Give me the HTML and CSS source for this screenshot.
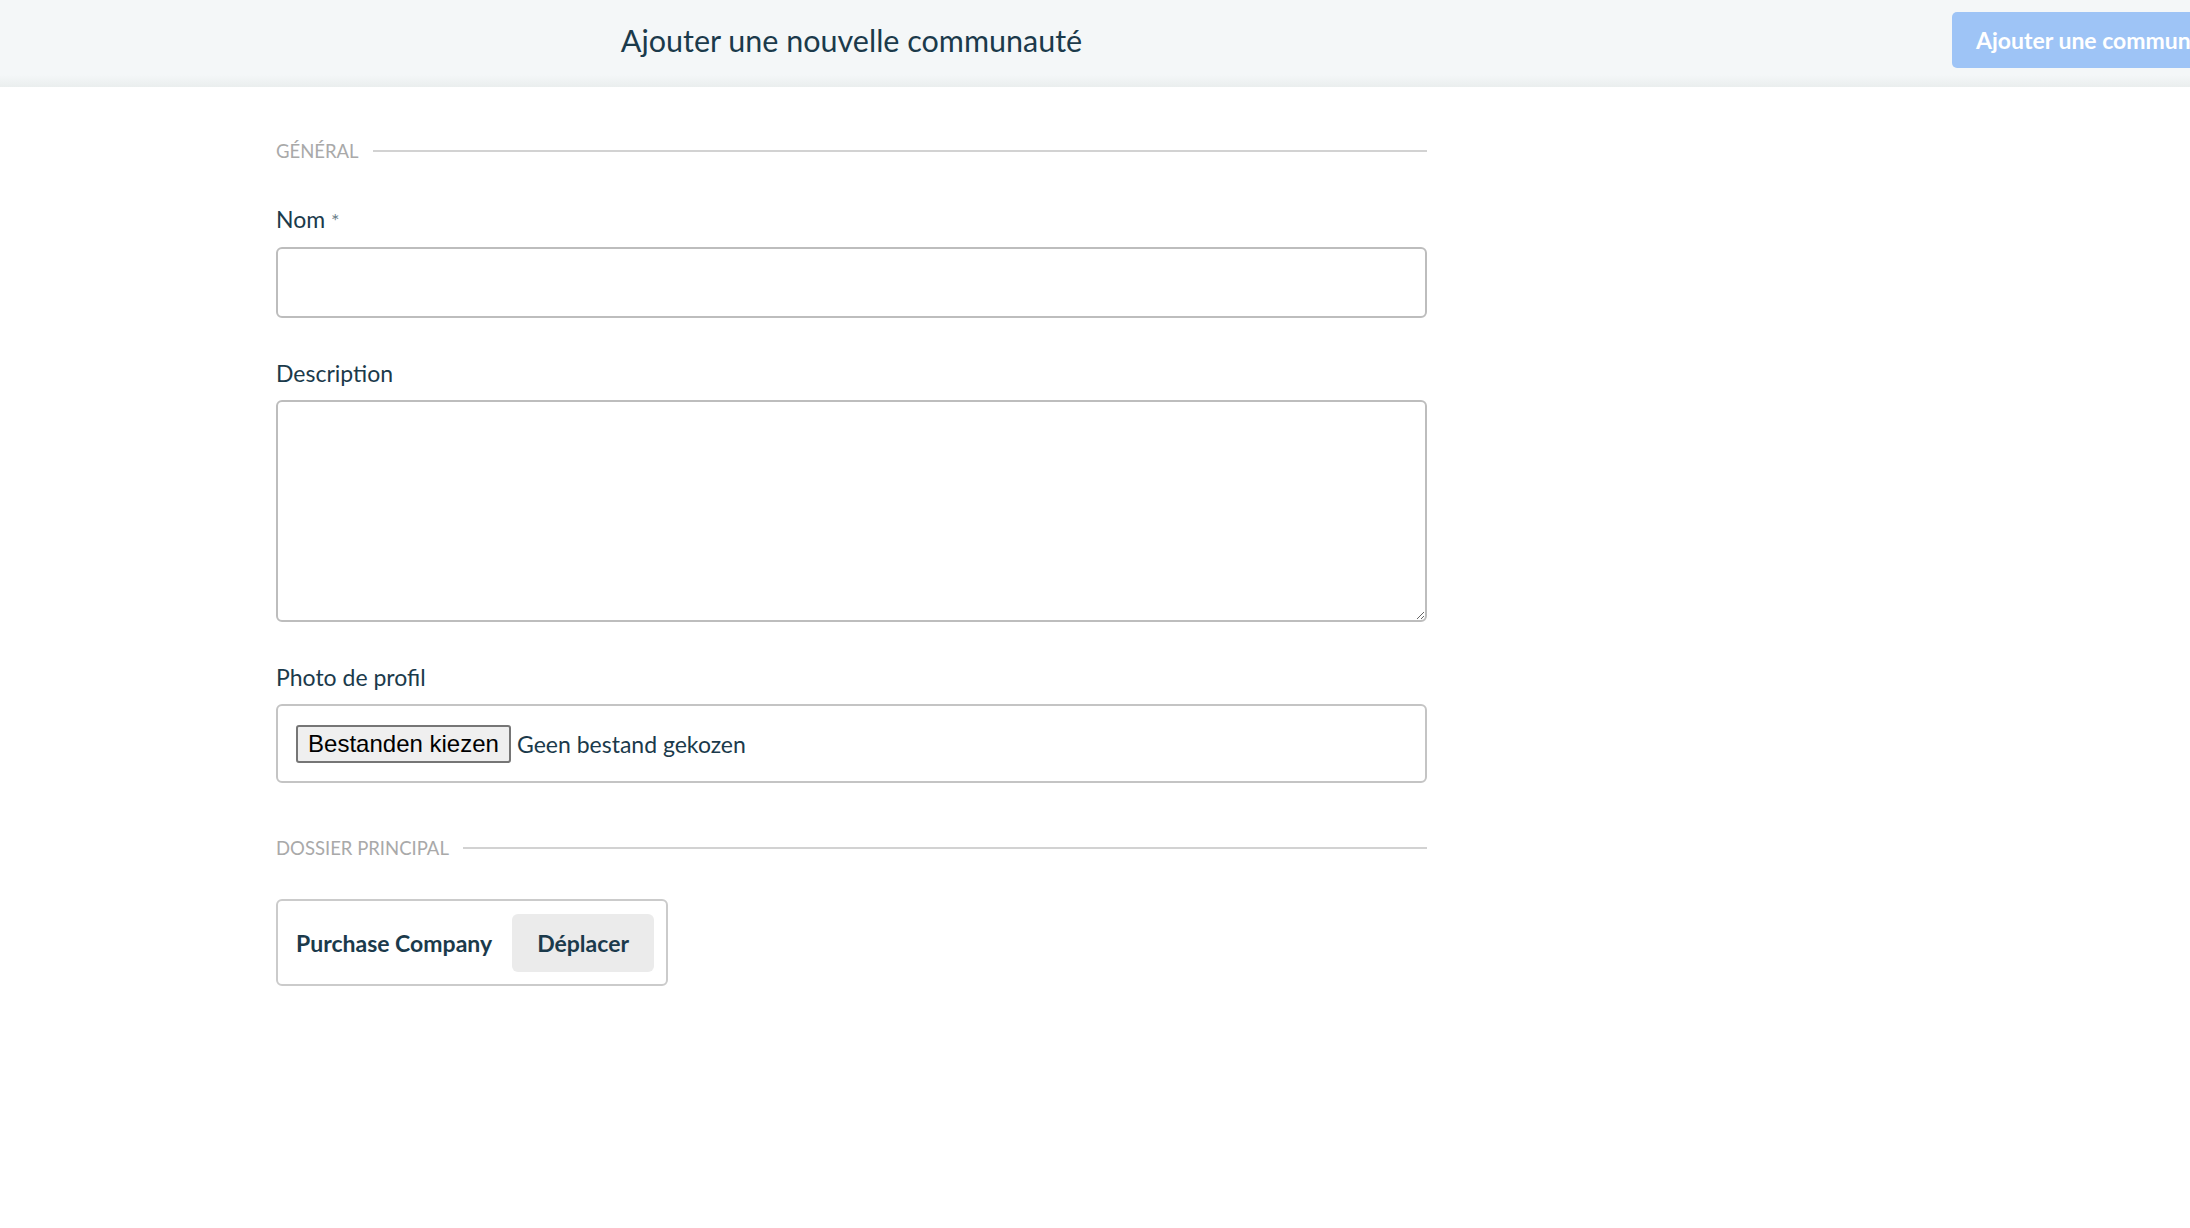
FILE: index.html
```html
<!DOCTYPE html>
<html lang="fr">
  <head>
    <meta charset="UTF-8" />
    <meta name="viewport" content="width=device-width, initial-scale=1" />
    <title>Ajouter une nouvelle communauté</title>
    <link rel="stylesheet" href="styles.css">
  </head>
  <body>
    <header class="topbar">
      <h1 class="topbar-title">Ajouter une nouvelle communauté</h1>
      <button type="button" class="btn-primary" disabled>Ajouter une communauté</button>
    </header>

    <main class="page">
      <form class="community-form" autocomplete="off" novalidate>
        <div class="section-title">
          <span>Général</span>
        </div>

        <div class="field">
          <label for="name">Nom <span class="required">*</span></label>
          <input type="text" id="name" class="input" />
        </div>

        <div class="field">
          <label for="description">Description</label>
          <textarea id="description" class="input textarea"></textarea>
        </div>

        <div class="field field--last">
          <label for="photo">Photo de profil</label>
          <div class="file-box">
            <button type="button" class="file-btn" id="photo">Bestanden kiezen</button>
            <span class="file-name">Geen bestand gekozen</span>
          </div>
        </div>

        <div class="section-title section-title--folder">
          <span>Dossier principal</span>
        </div>

        <div class="folder-box">
          <span class="folder-name">Purchase Company</span>
          <button type="button" class="btn-light">Déplacer</button>
        </div>
      </form>
    </main>
  </body>
</html>
```

FILE: styles.css
```css
* {
  box-sizing: border-box;
}
body {
  font-family: Lato, "Open Sans", sans-serif;
  color: #1b3a4b;
  background: #fff;
  margin: 0;
  overflow: hidden;
}
.topbar {
  height: 87px;
  display: flex;
  padding-left: 276px;
  background: linear-gradient(to bottom, #f4f7f8 0, #f4f7f8 75px, #eaeeee 87px);
}
.topbar-title {
  flex-shrink: 0;
  width: 1151px;
  margin: 0;
  padding-top: 22px;
  text-align: center;
  font-size: 30.5px;
  font-weight: 400;
  line-height: 36px;
  color: #1b3a4b;
}
.btn-primary {
  flex-shrink: 0;
  align-self: flex-start;
  margin: 12px 0 0 525px;
  height: 56px;
  padding: 0 24px;
  border: none;
  border-radius: 5px;
  background: #9ec4f6;
  color: #fff;
  font-family: inherit;
  font-size: 23px;
  font-weight: 700;
  white-space: nowrap;
}
.page {
  padding: 54px 0 0 276px;
}
.community-form {
  width: 1151px;
}
.section-title {
  display: flex;
  align-items: center;
  gap: 14px;
  font-size: 18.5px;
  line-height: 20px;
  text-transform: uppercase;
  color: #a9a9a9;
  margin-bottom: 43px;
}
.section-title::after {
  content: "";
  flex: 1;
  height: 2px;
  background: #d2d2d2;
}
.section-title--folder {
  margin-top: 55px;
  margin-bottom: 41px;
}
.field {
  margin-bottom: 40px;
}
.field--last {
  margin-bottom: 0;
}
label {
  display: block;
  font-size: 23px;
  line-height: 30px;
  margin-bottom: 12px;
  color: #1b3a4b;
}
.required {
  color: #6b7f8a;
  font-size: 20px;
}
.input {
  display: block;
  width: 100%;
  height: 71px;
  border: 2px solid #bdbdbd;
  border-radius: 6px;
  padding: 10px 16px;
  font-family: inherit;
  font-size: 23px;
  color: #1b3a4b;
  background: #fff;
}
.textarea {
  height: 222px;
  resize: vertical;
}
.file-box {
  display: flex;
  align-items: center;
  gap: 6px;
  height: 79px;
  padding-left: 18px;
  border: 2px solid #c4c4c4;
  border-radius: 6px;
}
.file-btn {
  height: 38px;
  width: 215px;
  padding: 0;
  border: 2px solid #767676;
  border-radius: 3px;
  background: #efefef;
  font-family: "Liberation Sans", Arial, sans-serif;
  font-size: 24px;
  color: #000;
}
.file-name {
  font-size: 23px;
}
.folder-box {
  display: inline-flex;
  align-items: center;
  gap: 20px;
  height: 87px;
  padding: 0 12px 0 18px;
  border: 2px solid #cbcbcb;
  border-radius: 6px;
}
.folder-name {
  font-size: 23px;
  font-weight: 700;
}
.btn-light {
  height: 58px;
  width: 142px;
  border: none;
  border-radius: 6px;
  background: #ebebeb;
  color: #1b3a4b;
  font-family: inherit;
  font-size: 23px;
  font-weight: 700;
}
```
